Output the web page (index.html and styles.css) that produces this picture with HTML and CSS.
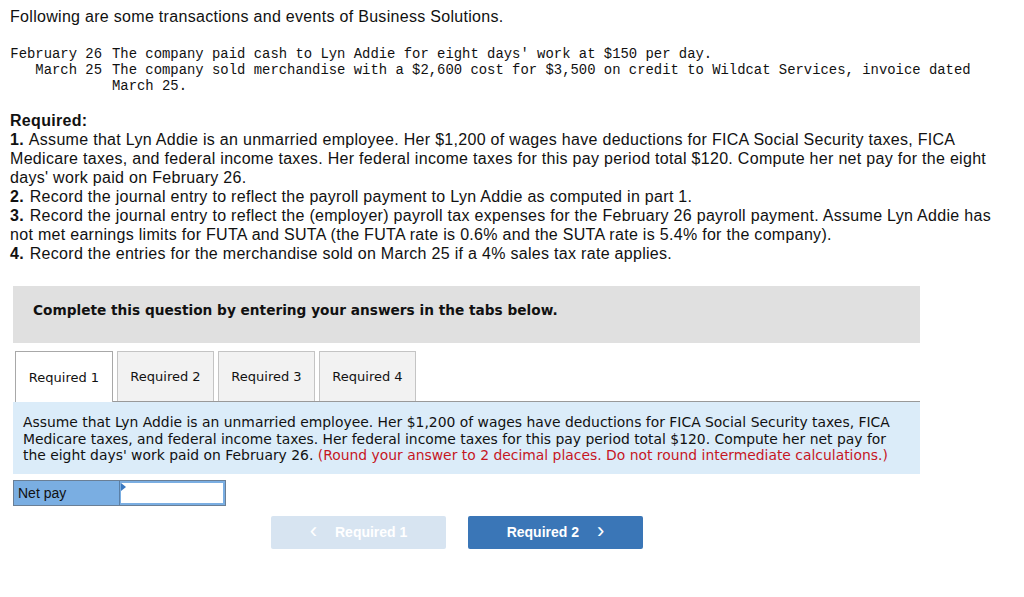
FILE: index.html
```html
<!DOCTYPE html>
<html>
<head>
<meta charset="utf-8">
<link rel="stylesheet" href="styles.css">
</head>
<body>
<div class="page">
  <p class="intro">Following are some transactions and events of Business Solutions.</p>
  <div class="trans">
    <div class="trow"><span class="tdate">February 26</span><span class="ttext">The company paid cash to Lyn Addie for eight days' work at $150 per day.</span></div>
    <div class="trow"><span class="tdate">March 25</span><span class="ttext">The company sold merchandise with a $2,600 cost for $3,500 on credit to Wildcat Services, invoice dated March 25.</span></div>
  </div>
  <div class="required">
    <div class="req-title">Required:</div>
    <div><b>1.</b> Assume that Lyn Addie is an unmarried employee. Her $1,200 of wages have deductions for FICA Social Security taxes, FICA Medicare taxes, and federal income taxes. Her federal income taxes for this pay period total $120. Compute her net pay for the eight days' work paid on February 26.</div>
    <div><b>2.</b> Record the journal entry to reflect the payroll payment to Lyn Addie as computed in part 1.</div>
    <div><b>3.</b> Record the journal entry to reflect the (employer) payroll tax expenses for the February 26 payroll payment. Assume Lyn Addie has not met earnings limits for FUTA and SUTA (the FUTA rate is 0.6% and the SUTA rate is 5.4% for the company).</div>
    <div><b>4.</b> Record the entries for the merchandise sold on March 25 if a 4% sales tax rate applies.</div>
  </div>
  <div class="banner">Complete this question by entering your answers in the tabs below.</div>
  <div class="tabs">
    <div class="tab active">Required 1</div>
    <div class="tab">Required 2</div>
    <div class="tab">Required 3</div>
    <div class="tab">Required 4</div>
  </div>
  <div class="panel">Assume that Lyn Addie is an unmarried employee. Her $1,200 of wages have deductions for FICA Social Security taxes, FICA Medicare taxes, and federal income taxes. Her federal income taxes for this pay period total $120. Compute her net pay for the eight days' work paid on February 26. <span class="red">(Round your answer to 2 decimal places. Do not round intermediate calculations.)</span></div>
  <div class="answer">
    <div class="label">Net pay</div>
    <div class="input"><span class="flag"></span></div>
  </div>
  <div class="nav">
    <div class="btn prev"><span class="chev">&lsaquo;</span>Required 1</div>
    <div class="btn next">Required 2<span class="chev">&rsaquo;</span></div>
  </div>
</div>
</body>
</html>
```
FILE: styles.css
```css
html, body { margin: 0; padding: 0; background: #fff; }
.page { padding: 7px 10px 0 10px; color: #111; font-family: "Liberation Sans", Arial, sans-serif; }
.intro { margin: 0; font-size: 16px; line-height: 20px; letter-spacing: 0.3px; }
.trans { margin-top: 19px; font-family: "Liberation Mono", "Courier New", monospace; font-size: 13.9px; line-height: 16px; }
.trow { display: flex; }
.tdate { width: 92px; flex: none; text-align: right; margin-right: 10px; white-space: nowrap; }
.ttext { width: 865px; }
.required { margin-top: 17px; font-size: 16px; line-height: 19px; width: 1000px; letter-spacing: 0.3px; }
.required b { margin-right: 1px; }
.req-title { font-weight: bold; }
.banner { margin: 23px 0 0 3px; width: 907px; height: 57px; box-sizing: border-box; background: #e0e0e0; padding: 15px 20px; font-family: "DejaVu Sans", Verdana, sans-serif; font-weight: bold; font-size: 13.7px; line-height: 18px; color: #111; }
.tabs { display: flex; gap: 4px; margin: 8px 0 0 5px; width: 905px; border-bottom: 1px solid #999; height: 50px; }
.tab { width: 97px; height: 50px; box-sizing: border-box; border: 1px solid #c4c4c4; border-bottom: none; background: #f2f2f2; font-family: "DejaVu Sans", Verdana, sans-serif; font-size: 13px; display: flex; align-items: center; justify-content: center; color: #111; }
.tab.active { background: #fff; border-color: #a8a8a8; height: 51px; margin-bottom: -1px; width: 98px; }
.panel { margin-left: 3px; width: 907px; box-sizing: border-box; background: #dbecf9; padding: 12px 8px 10px 10px; font-family: "DejaVu Sans", Verdana, sans-serif; font-size: 13.9px; line-height: 16.5px; color: #111; }
.red { color: #c6161f; }
.answer { display: flex; margin: 6px 0 0 3px; width: 213px; height: 26px; border: 1px solid #6a7f96; box-sizing: border-box; }
.label { width: 106px; background: #7aaee2; font-size: 14px; line-height: 24px; padding-left: 4px; box-sizing: border-box; border-right: 1px solid #5a7fa6; }
.input { position: relative; flex: 1; background: #fff; border: 2px solid #7aaee2; border-left: 1px solid #7aaee2; }
.flag { position: absolute; left: 0; top: 0; width: 0; height: 0; border-left: 5px solid #3a78c0; border-top: 4px solid transparent; border-bottom: 4px solid transparent; }
.nav { display: flex; gap: 22px; margin: 10px 0 0 261px; }
.btn { width: 175px; height: 33px; border-radius: 2px; color: #fff; font-weight: bold; font-size: 14px; display: flex; align-items: center; justify-content: center; }
.prev { background: #d7e4f1; }
.next { background: #3a76b7; }
.chev { font-size: 22px; font-weight: normal; line-height: 20px; margin-top: -3px; }
.prev .chev { margin-right: 18px; }
.next .chev { margin-left: 18px; }
```
